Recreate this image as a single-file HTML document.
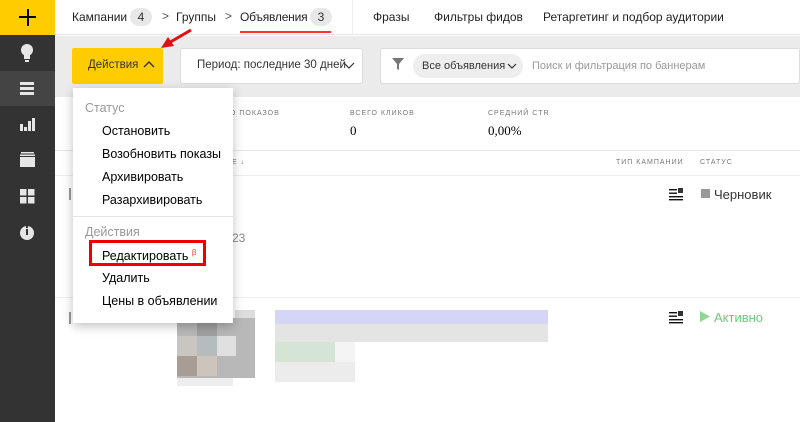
<!DOCTYPE html>
<html><head><meta charset="utf-8"><style>
*{margin:0;padding:0;box-sizing:border-box}
body{width:800px;height:422px;overflow:hidden;background:#fff;font-family:"Liberation Sans","DejaVu Sans",sans-serif;font-size:12px;color:#000;position:relative}
.a{position:absolute;white-space:nowrap}
.side{left:0;top:0;width:55px;height:422px;background:#333}
.lab{font-size:7px;letter-spacing:1px;color:#777}
.badge{background:#e8e8e8;border-radius:9px;height:18px;width:22px;text-align:center;line-height:18px;font-size:12px;color:#333}
.mi{left:102px;font-size:12.5px;color:#000}
</style></head><body>
<div class="a side"></div>
<div class="a" style="left:0;top:0;width:55px;height:35px;background:#fc0"></div>
<div class="a" style="left:19px;top:16px;width:17px;height:2px;background:#000"></div>
<div class="a" style="left:26.5px;top:9px;width:2px;height:17px;background:#000"></div>
<div class="a" style="left:0;top:71px;width:55px;height:35px;background:#444"></div>
<svg class="a" style="left:0;top:35px" width="55" height="215" fill="#e6e6e6">
<circle cx="27" cy="15" r="6"/><rect x="24" y="19" width="6" height="5"/><rect x="25" y="25" width="4" height="2"/>
<rect x="20" y="47" width="14" height="3"/><rect x="20" y="52" width="14" height="3"/><rect x="20" y="57" width="14" height="3"/>
<rect x="20" y="89" width="3" height="7"/><rect x="24" y="92" width="3" height="4"/><rect x="28" y="86" width="3" height="10"/><rect x="32" y="83" width="3" height="13"/>
<rect x="21" y="117" width="13" height="1.5"/><rect x="20" y="119.5" width="15" height="1.5"/><rect x="20" y="122" width="15" height="10"/>
<rect x="20" y="154" width="6.5" height="6.5"/><rect x="28" y="154" width="6.5" height="6.5"/><rect x="20" y="162" width="6.5" height="6.5"/><rect x="28" y="162" width="6.5" height="6.5"/>
<circle cx="27" cy="198" r="7"/>
</svg>
<div class="a" style="left:26px;top:226px;width:2px;height:2px;background:#333"></div>
<div class="a" style="left:26px;top:229px;width:2px;height:6px;background:#333"></div>
<!-- top bar -->
<div class="a" style="left:55px;top:0;width:745px;height:35px;background:#fff;border-bottom:1px solid #e5e5e5"></div>
<div class="a" style="left:72px;top:10px;color:#222">Кампании</div>
<div class="a badge" style="left:130px;top:8px">4</div>
<div class="a" style="left:162px;top:9px;color:#555">&gt;</div>
<div class="a" style="left:176px;top:10px;color:#222">Группы</div>
<div class="a" style="left:225px;top:9px;color:#555">&gt;</div>
<div class="a" style="left:240px;top:10px;color:#222;letter-spacing:-0.2px">Объявления</div>
<div class="a badge" style="left:310px;top:8px">3</div>
<div class="a" style="left:240px;top:31px;width:91px;height:2px;background:#f33"></div>
<div class="a" style="left:352px;top:0;width:1px;height:35px;background:#eee"></div>
<div class="a" style="left:373px;top:10px;color:#222">Фразы</div>
<div class="a" style="left:434px;top:10px;color:#222">Фильтры фидов</div>
<div class="a" style="left:543px;top:10px;color:#222">Ретаргетинг и подбор аудитории</div>
<!-- gray band -->
<div class="a" style="left:55px;top:36px;width:745px;height:61px;background:#ebebeb"></div>
<div class="a" style="left:72px;top:48px;width:91px;height:36px;background:#fc0;border-radius:2px"></div>
<div class="a" style="left:88px;top:59px;font-size:11.5px;color:#333">Действия</div>
<svg class="a" style="left:143px;top:61px" width="12" height="8"><path d="M1 6 L6 1 L11 6" stroke="#333" stroke-width="1.4" fill="none"/></svg>
<div class="a" style="left:180px;top:48px;width:183px;height:36px;background:#fff;border:1px solid #ddd;border-radius:3px"></div>
<div class="a" style="left:197px;top:59px;font-size:11.5px;color:#333">Период: последние 30 дней</div>
<svg class="a" style="left:343px;top:62px" width="12" height="8"><path d="M1 1 L6 6 L11 1" stroke="#333" stroke-width="1.2" fill="none"/></svg>
<div class="a" style="left:380px;top:48px;width:420px;height:36px;background:#fff;border:1px solid #ddd;border-radius:3px"></div>
<svg class="a" style="left:392px;top:58px" width="12" height="12"><path d="M0 0 H12 L7 6 V12 L5 11 V6 Z" fill="#777"/></svg>
<div class="a" style="left:413px;top:54px;width:110px;height:24px;background:#eee;border-radius:12px"></div>
<div class="a" style="left:422px;top:60px;font-size:11px;color:#333">Все объявления</div>
<svg class="a" style="left:507px;top:63px" width="10" height="7"><path d="M1 1 L5 5 L9 1" stroke="#333" stroke-width="1.2" fill="none"/></svg>
<div class="a" style="left:532px;top:60px;font-size:11px;color:#999">Поиск и фильтрация по баннерам</div>
<!-- stats -->
<div class="a lab" style="left:230px;top:110px">О ПОКАЗОВ</div>
<div class="a lab" style="left:350px;top:110px">ВСЕГО КЛИКОВ</div>
<div class="a lab" style="left:488px;top:110px">СРЕДНИЙ CTR</div>
<div class="a" style="left:350px;top:123px;font-family:'Liberation Serif',serif;font-size:13px">0</div>
<div class="a" style="left:488px;top:123px;font-family:'Liberation Serif',serif;font-size:13px">0,00%</div>
<div class="a" style="left:55px;top:150px;width:745px;height:1px;background:#e5e5e5"></div>
<div class="a lab" style="left:232px;top:159px">Е ↓</div>
<div class="a lab" style="left:616px;top:159px">ТИП КАМПАНИИ</div>
<div class="a lab" style="left:700px;top:159px">СТАТУС</div>
<div class="a" style="left:55px;top:175px;width:745px;height:1px;background:#eee"></div>
<div class="a" style="left:69px;top:188px;width:2px;height:12px;background:#999"></div>
<div class="a" style="left:232px;top:231px;font-size:12px;color:#888">23</div>
<svg class="a" style="left:669px;top:188px" width="15" height="13"><rect x="0" y="1" width="8" height="1.4" fill="#111"/><rect x="0" y="4.5" width="8" height="1.4" fill="#111"/><rect x="9" y="0" width="5" height="5" fill="#333"/><rect x="0" y="8" width="14" height="1.4" fill="#111"/><rect x="0" y="11" width="14" height="1.4" fill="#111"/></svg>
<div class="a" style="left:701px;top:189px;width:9px;height:9px;background:#999"></div>
<div class="a" style="left:714px;top:187px;font-size:13px;color:#333">Черновик</div>
<div class="a" style="left:55px;top:297px;width:745px;height:1px;background:#eee"></div>
<div class="a" style="left:69px;top:312px;width:2px;height:12px;background:#999"></div>
<svg class="a" style="left:669px;top:311px" width="15" height="13"><rect x="0" y="1" width="8" height="1.4" fill="#111"/><rect x="0" y="4.5" width="8" height="1.4" fill="#111"/><rect x="9" y="0" width="5" height="5" fill="#333"/><rect x="0" y="8" width="14" height="1.4" fill="#111"/><rect x="0" y="11" width="14" height="1.4" fill="#111"/></svg>
<svg class="a" style="left:700px;top:311px" width="10" height="11"><path d="M0 0 L10 5.5 L0 11Z" fill="#8fd694"/></svg>
<div class="a" style="left:714px;top:310px;font-size:13px;color:#6cc97a">Активно</div>
<!-- blurred -->
<svg class="a" style="left:177px;top:310px" width="380" height="80">
<rect x="0" y="8" width="78" height="60" fill="#b8b8b8"/>
<rect x="20" y="8" width="20" height="18" fill="#a0a0a0"/><rect x="0" y="26" width="20" height="20" fill="#c9c6c2"/><rect x="20" y="26" width="20" height="20" fill="#b5bcbd"/><rect x="40" y="26" width="19" height="20" fill="#e0e0e0"/>
<rect x="0" y="46" width="20" height="20" fill="#a89c94"/><rect x="20" y="46" width="20" height="20" fill="#cdc4bc"/><rect x="58" y="0" width="20" height="8" fill="#ddd"/><rect x="0" y="68" width="56" height="8" fill="#eee"/>
<rect x="98" y="0" width="273" height="14" fill="#d5d5f7"/><rect x="98" y="14" width="273" height="18" fill="#e4e4e4"/>
<rect x="98" y="32" width="60" height="20" fill="#d6e4d6"/><rect x="158" y="32" width="20" height="20" fill="#f4f4f4"/>
<rect x="98" y="52" width="80" height="20" fill="#ececec"/>
</svg>
<!-- dropdown -->
<div class="a" style="left:73px;top:88px;width:160px;height:235px;background:#fff;box-shadow:0 3px 10px rgba(0,0,0,.25)"></div>
<div class="a" style="left:85px;top:101px;font-size:12.5px;color:#999">Статус</div>
<div class="a mi" style="top:124px">Остановить</div>
<div class="a mi" style="top:147px">Возобновить показы</div>
<div class="a mi" style="top:170px">Архивировать</div>
<div class="a mi" style="top:193px">Разархивировать</div>
<div class="a" style="left:73px;top:216px;width:160px;height:1px;background:#e5e5e5"></div>
<div class="a" style="left:85px;top:225px;font-size:12.5px;color:#999">Действия</div>
<div class="a" style="left:89px;top:240px;width:117px;height:26px;border:3px solid #e00"></div>
<div class="a mi" style="top:248px">Редактировать <sup style="color:#f33;font-size:8px">β</sup></div>
<div class="a mi" style="top:271px">Удалить</div>
<div class="a mi" style="top:294px">Цены в объявлении</div>
<!-- arrow -->
<svg class="a" style="left:155px;top:20px" width="45" height="35"><path d="M36 10 L12 24" stroke="#e01010" stroke-width="3"/><path d="M6 28 L13 17 L19 26 Z" fill="#e01010"/></svg>
</body></html>
